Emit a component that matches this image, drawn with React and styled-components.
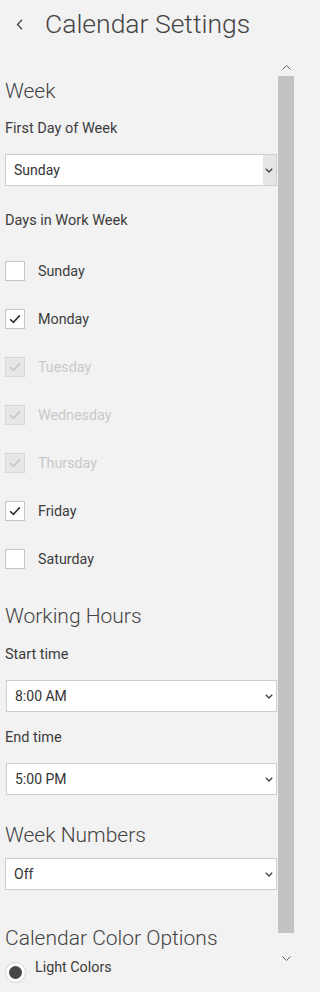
import React from 'react';
import styled, { createGlobalStyle } from 'styled-components';

const GlobalStyle = createGlobalStyle`
    html, body {
        margin: 0;
        padding: 0;
        background: #f2f2f2;
        overflow: hidden;
    }
    body {
        font-family: Roboto, "Open Sans", "Liberation Sans", sans-serif;
        color: #333;
    }
`;

const Page = styled.div`
    width: 296px;
    height: 992px;
    overflow: hidden;
    background: #f2f2f2;
    display: flex;
    flex-direction: column;
`;

const Header = styled.div`
    height: 58px;
    flex: none;
    display: flex;
    align-items: flex-start;
`;

const BackButton = styled.button`
    width: 40px;
    height: 48px;
    padding: 0;
    border: 0;
    background: transparent;
    display: flex;
    align-items: center;
    justify-content: center;
    cursor: pointer;
`;

const Title = styled.h1`
    margin: 0 0 0 5px;
    font-size: 26.5px;
    font-weight: 300;
    line-height: 48px;
    color: #444;
    white-space: nowrap;
`;

const Body = styled.div`
    flex: 1;
    display: flex;
    min-height: 0;
`;

const Content = styled.div`
    width: 278px;
    flex: none;
    overflow: hidden;
`;

const SectionTitle = styled.h2`
    margin: ${props => props.top}px 0 0 5px;
    font-size: 21px;
    font-weight: 300;
    line-height: 28px;
    color: #444;
    white-space: nowrap;
`;

const FieldLabel = styled.div`
    margin: ${props => props.top}px 0 0 5px;
    font-size: 14.5px;
    line-height: 20px;
    color: #3c3c3c;
`;

const SelectBox = styled.div`
    margin: ${props => props.top}px 0 0 ${props => props.left || 5}px;
    height: 32px;
    box-sizing: border-box;
    width: ${props => 272 - ((props.left || 5) - 5)}px;
    background: #fff;
    border: 1px solid #cdcdcd;
    display: flex;
    align-items: stretch;
    font-size: 14px;
    color: #333;
`;

const SelectValue = styled.span`
    flex: 1;
    padding-left: 8px;
    display: flex;
    align-items: center;
`;

const SelectArrow = styled.span`
    width: 12px;
    display: flex;
    align-items: center;
    justify-content: center;
    background: ${props => props.shaded ? '#e6e6e6' : 'transparent'};
    padding-right: 1px;
`;

const DayList = styled.div`
    margin-top: 16px;
    display: flex;
    flex-direction: column;
`;

const DayRow = styled.label`
    height: 48px;
    display: flex;
    align-items: center;
    padding-left: 5px;
    font-size: 14.3px;
    color: ${props => props.disabled ? '#c9c9c9' : '#3c3c3c'};
`;

const Box = styled.span`
    width: 20px;
    height: 20px;
    box-sizing: border-box;
    margin-right: 13px;
    border: 1px solid ${props => props.disabled ? '#d6d6d6' : '#c4c4c4'};
    background: ${props => props.disabled ? '#e6e6e6' : '#fff'};
    display: flex;
    align-items: center;
    justify-content: center;
`;

const RadioRow = styled.label`
    margin: 8px 0 0 5px;
    display: flex;
    align-items: flex-start;
    font-size: 14.3px;
    color: #3c3c3c;
`;

const RadioCircle = styled.span`
    margin-top: 2px;
    width: 21px;
    height: 21px;
    box-sizing: border-box;
    border-radius: 50%;
    border: 1px solid #d4d4d4;
    background: #fff;
    display: flex;
    align-items: center;
    justify-content: center;
    margin-right: 9px;
    &::after {
        content: '';
        width: 13px;
        height: 13px;
        border-radius: 50%;
        background: #464646;
    }
`;

const RadioText = styled.span`
    line-height: 14px;
`;

const Scrollbar = styled.div`
    width: 16px;
    flex: none;
    display: flex;
    flex-direction: column;
    align-items: center;
`;

const ScrollArrow = styled.div`
    height: ${props => props.size}px;
    width: 16px;
    display: flex;
    align-items: center;
    justify-content: center;
    flex: none;
`;

const Thumb = styled.div`
    width: 16px;
    height: 857px;
    background: #c2c2c2;
    flex: none;
`;

const Chevron = ({ up }) => (
    <svg width="9" height="5" viewBox="0 0 9 5">
        <polyline
            points={up ? '0.5,4.5 4.5,0.5 8.5,4.5' : '0.5,0.5 4.5,4.5 8.5,0.5'}
            fill="none"
            stroke="#606060"
            strokeWidth="1"
        />
    </svg>
);

const SelectChevron = () => (
    <svg width="8" height="5" viewBox="0 0 8 5">
        <polyline points="0.8,0.8 4,4 7.2,0.8" fill="none" stroke="#444" strokeWidth="1.4" />
    </svg>
);

const Check = ({ color }) => (
    <svg width="12" height="10" viewBox="0 0 12 10">
        <polyline points="1.2,5.2 4.4,8.4 10.8,1.4" fill="none" stroke={color} strokeWidth="1.6" />
    </svg>
);

const Select = ({ value, top, left, shaded }) => (
    <SelectBox top={top} left={left}>
        <SelectValue>{value}</SelectValue>
        <SelectArrow shaded={shaded}><SelectChevron /></SelectArrow>
    </SelectBox>
);

const days = [
    { name: 'Sunday', checked: false },
    { name: 'Monday', checked: true },
    { name: 'Tuesday', checked: true, disabled: true },
    { name: 'Wednesday', checked: true, disabled: true },
    { name: 'Thursday', checked: true, disabled: true },
    { name: 'Friday', checked: true },
    { name: 'Saturday', checked: false },
];

export default function App() {
    return (
        <Page>
            <GlobalStyle />
            <Header>
                <BackButton aria-label="Back">
                    <svg width="8" height="11" viewBox="0 0 8 11">
                        <polyline points="6,0.8 1.5,5.5 6,10.2" fill="none" stroke="#444" strokeWidth="1.3" />
                    </svg>
                </BackButton>
                <Title>Calendar Settings</Title>
            </Header>
            <Body>
                <Content>
                    <SectionTitle top={19}>Week</SectionTitle>
                    <FieldLabel top={14}>First Day of Week</FieldLabel>
                    <Select top={15} value="Sunday" shaded />
                    <FieldLabel top={25}>Days in Work Week</FieldLabel>
                    <DayList>
                        {days.map(d => (
                            <DayRow key={d.name} disabled={d.disabled}>
                                <Box disabled={d.disabled}>
                                    {d.checked && <Check color={d.disabled ? '#c6c6c6' : '#333'} />}
                                </Box>
                                {d.name}
                            </DayRow>
                        ))}
                    </DayList>
                    <SectionTitle top={19}>Working Hours</SectionTitle>
                    <FieldLabel top={15}>Start time</FieldLabel>
                    <Select top={15} left={6} value="8:00 AM" />
                    <FieldLabel top={16}>End time</FieldLabel>
                    <Select top={15} left={6} value="5:00 PM" />
                    <SectionTitle top={26}>Week Numbers</SectionTitle>
                    <Select top={9} value="Off" />
                    <SectionTitle top={34}>Calendar Color Options</SectionTitle>
                    <RadioRow>
                        <RadioCircle />
                        <RadioText>Light Colors</RadioText>
                    </RadioRow>
                </Content>
                <Scrollbar>
                    <ScrollArrow size={18}><Chevron up /></ScrollArrow>
                    <Thumb />
                    <ScrollArrow size={50}><Chevron /></ScrollArrow>
                </Scrollbar>
            </Body>
        </Page>
    );
}
